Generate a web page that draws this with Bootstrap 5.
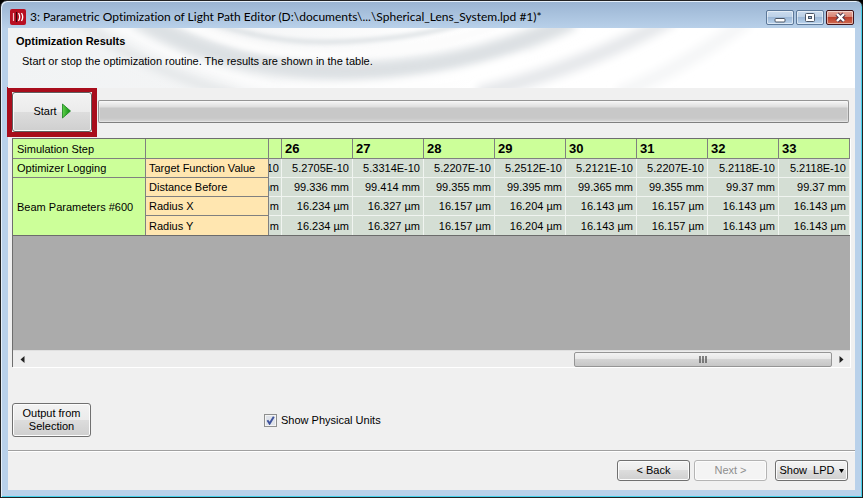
<!DOCTYPE html>
<html lang="en">
<head>
<meta charset="utf-8">
<meta name="viewport" content="width=device-width, initial-scale=1">
<title>3: Parametric Optimization of Light Path Editor</title>
<link rel="stylesheet" href="https://cdn.jsdelivr.net/npm/bootstrap@5.3.0/dist/css/bootstrap.min.css">
<style>
body{background:#000;font:11px/13px "Liberation Sans",Arial,sans-serif;color:#000}
.app-window{background:linear-gradient(#9ab4d2,#b9d1ea 28px);border:1px solid #222;border-radius:7px 7px 0 0;box-shadow:inset 1px 1px 0 #e6f0fa,inset -1px -1px 0 #45d0ea;padding:0 7px 7px}
.title-bar{height:27px;padding:0 1px 0 2px}
.title-text{font:12px/16px Lato,"Noto Sans",sans-serif;font-variant-ligatures:none;padding:8px 0 0 4px}
.title-icon{margin-top:8px}
.win-btns{gap:2px;padding-top:9px}
.win-btn{width:28px;height:15px;padding:0;border:1px solid #5c7899;border-radius:2px;background:linear-gradient(#c9dbee,#bcd0e6 48%,#9db9d8 50%,#b9d2ec);box-shadow:inset 0 0 0 1px #ffffff80}
.win-close{border-color:#43141a;background:linear-gradient(#e6a99c,#d88575 45%,#bd3f2c 50%,#cf6a50)}
.win-btn svg{display:block;margin:auto}
.banner{height:60px;background:#fff}
.banner-art{inset:0;width:100%;height:100%}
.banner h1{font:bold 11px/13px "Liberation Sans",Arial,sans-serif;margin:0;padding:7px 8px 0}
.banner p{margin:0;padding:7px 14px 0}
.page-body{background:#f0f0f0}
.run-row{padding-right:6px}
.hilite{border:5px solid #a80d1c;margin:-1px 1px 1px -1px}
.btn-win{--bs-btn-color:#000;--bs-btn-hover-color:#000;--bs-btn-disabled-color:#8e8e8e;font-size:11px;line-height:13px;padding:0;border:1px solid #707070;border-radius:3px;background:linear-gradient(#f3f3f3,#ebebeb 49%,#dddddd 50%,#cfcfcf);box-shadow:inset 0 0 0 1px #fcfcfc}
.btn-win:hover{background:linear-gradient(#eaf6fd,#d9f0fc 49%,#bee6fd 50%,#a7d9f5);border-color:#3c7fb1}
.btn-win:disabled{background:#f4f4f4;border-color:#b4b4b4;opacity:1}
.btn-start{width:80px;height:40px;border-color:#606060;gap:5px;padding-bottom:2px}
.btn-output{width:79px;height:34px}
.btn-nav{width:73px;height:21px}
.run-bar{height:23px;margin-top:12px;border:1px solid #959595;border-bottom-color:#808080;border-radius:2px;background:linear-gradient(#f6f6f6,#dedede 6px,#c8c8c8 7px,#c8c8c8 17px,#d8d8d8);box-shadow:inset 0 0 0 1px #ffffff50}
.grid-panel{margin:0 5px 0 4px;background:#ababab;border:1px solid #6e6e6e;border-width:1px 0 0 1px;box-shadow:1px 1px 0 #fff}
.result-grid{width:100%;table-layout:fixed;border-collapse:separate;border-spacing:0;border-bottom:1px solid #6c6c6c}
.result-grid th,.result-grid td{height:19px;padding:0 3px;border:0 solid #808080;border-width:0 1px 1px 0;white-space:nowrap;overflow:hidden;line-height:18px;vertical-align:middle;font-weight:400}
.result-grid th{background:#ccff99}
.result-grid th:first-child{padding-left:4px}
.result-grid th.sub-head{background:#ffe6b0;padding-left:3px}
.result-grid thead th{height:20px;font-size:13px;font-weight:700}
.result-grid thead th:first-child{font-size:11px;font-weight:400}
.result-grid td{background:#d4ded4;border-color:#f0f4f0;text-align:right}
.result-grid td.cut{padding:0 2px 0 0}
.result-grid tbody tr:last-child td,.result-grid tbody tr:last-child th,.result-grid th[rowspan]{border-bottom-width:0}
.col-group{width:133px}.col-name{width:123px}.col-cut{width:13px}
.scroll-strip{height:17px;background:#ededed;border-top:1px solid #e0e0e0}
.scroll-arrow{width:18px;height:16px;border:0;padding:0;background:transparent}
.scroll-arrow svg{display:block;margin:auto}
.scroll-thumb{width:258px;height:15px;border:1px solid #959595;border-radius:2px;background:linear-gradient(#f3f3f3,#e6e6e6 49%,#d4d4d4 50%,#c6c6c6);padding:0}
.scroll-thumb svg{display:block;margin:auto}
.option-row{padding:36px 5px 13px 4px}
.units-check{margin-left:173px;gap:4px}
.units-check .form-check-input{width:13px;height:13px;margin:0;float:none;border:1px solid #8e8f8f;border-radius:0;box-shadow:inset 0 0 0 1px #f4f4f4}
.units-check .form-check-input:checked{background:#dfe3ea url("data:image/svg+xml,%3Csvg xmlns='http://www.w3.org/2000/svg' viewBox='0 0 11 11'%3E%3Cpath d='M2.4 5.2 4.6 8.6 8.8 1.8' fill='none' stroke='%233f539c' stroke-width='1.9'/%3E%3C/svg%3E") center/11px 11px no-repeat}
.nav-row{border-top:1px solid #a0a0a0;box-shadow:inset 0 1px 0 #fff;padding:9px 7px 9px 0}
</style>
</head>
<body>
<div class="app-window d-flex flex-column min-vh-100">
  <header class="title-bar d-flex align-items-start">
    <svg class="title-icon flex-shrink-0" width="16" height="16" viewBox="0 0 16 16" aria-hidden="true">
      <rect width="16" height="16" rx="2" fill="#b80f22"/>
      <path d="M3.5 4v8" stroke="#f3c9cd" stroke-width="1.2"/><path d="M6.5 3v10" stroke="#30060b" stroke-width="1.2"/>
      <path d="M8.5 4q2.4 4 0 8M11.5 4q2.4 4 0 8" fill="none" stroke="#fff" stroke-width="1.3"/>
    </svg>
    <div class="title-text text-truncate flex-grow-1">3: Parametric Optimization of Light Path Editor (D:\documents\...\Spherical_Lens_System.lpd #1)*</div>
    <div class="win-btns d-flex flex-shrink-0">
      <button type="button" class="win-btn" aria-label="Minimize"><svg width="12" height="11" viewBox="0 0 12 11"><rect x="1" y="6.5" width="10" height="3.5" rx="1" fill="#fff" stroke="#4b5666"/></svg></button>
      <button type="button" class="win-btn" aria-label="Maximize"><svg width="12" height="11" viewBox="0 0 12 11"><rect x="1.5" y="1.5" width="9" height="8" rx="1" fill="#fff" stroke="#4b5666"/><rect x="4.5" y="4.5" width="3" height="2" fill="#9db9d8" stroke="#4b5666"/></svg></button>
      <button type="button" class="win-btn win-close" aria-label="Close"><svg width="13" height="11" viewBox="0 0 13 11"><path d="M3 2l7 7M10 2l-7 7" stroke="#51364a" stroke-width="4.4"/><path d="M3 2l7 7M10 2l-7 7" stroke="#fff" stroke-width="2.4"/></svg></button>
    </div>
  </header>

  <section class="banner position-relative overflow-hidden">
    <svg class="banner-art position-absolute" viewBox="0 0 847 60" preserveAspectRatio="none" aria-hidden="true">
      <defs>
        <filter id="soft" x="-10%" y="-50%" width="120%" height="200%"><feGaussianBlur stdDeviation="4"/></filter>
        <filter id="fine" x="-10%" y="-50%" width="120%" height="200%"><feGaussianBlur stdDeviation="2"/></filter>
        <linearGradient id="wash"><stop offset="0" stop-color="#f1f3f4"/><stop offset=".25" stop-color="#f4f5f6"/><stop offset=".55" stop-color="#fff"/></linearGradient>
      </defs>
      <rect width="847" height="60" fill="url(#wash)"/>
      <g fill="none">
        <path d="M70-8Q130 40 230 68" stroke="#e3e6e8" stroke-width="9" filter="url(#soft)"/>
        <path d="M100-8Q170 36 270 60" stroke="#fff" stroke-width="7" filter="url(#soft)"/>
        <path d="M130-10Q220 44 340 43Q460 42 565-8" stroke="#dce0e3" stroke-width="18" filter="url(#soft)"/>
        <path d="M165-10Q240 28 325 26Q425 26 500-8" stroke="#fcfcfc" stroke-width="9" filter="url(#fine)"/>
        <path d="M195-8Q260 15 320 14Q400 13 470-8" stroke="#dadfe2" stroke-width="4" filter="url(#fine)"/>
        <path d="M270 60Q410 68 520 30" stroke="#fff" stroke-width="8" filter="url(#soft)"/>
        <path d="M470 66Q580 38 665-10" stroke="#e6e8eb" stroke-width="15" filter="url(#soft)"/>
        <path d="M610 66Q675 40 740-8" stroke="#f5f6f7" stroke-width="14" filter="url(#soft)"/>
      </g>
    </svg>
    <div class="position-relative">
      <h1>Optimization Results</h1>
      <p>Start or stop the optimization routine. The results are shown in the table.</p>
    </div>
  </section>

  <main class="page-body d-flex flex-column flex-grow-1">
    <div class="run-row d-flex align-items-start">
      <div class="hilite flex-shrink-0">
        <button type="button" class="btn btn-win btn-start d-flex align-items-center justify-content-center">Start
          <svg width="9" height="16" viewBox="0 0 9 16" aria-hidden="true"><defs><linearGradient id="go" x2="1"><stop stop-color="#5fd04a"/><stop offset="1" stop-color="#0c8a10"/></linearGradient></defs><path d="M.5 1v14L8.500 8z" fill="url(#go)" stroke="#15801a" stroke-width=".8"/></svg>
        </button>
      </div>
      <div class="flex-grow-1 run-bar" role="progressbar" aria-label="Optimization progress" aria-valuenow="0" aria-valuemin="0" aria-valuemax="100"></div>
    </div>

    <section class="grid-panel d-flex flex-column flex-grow-1 justify-content-between">
      <table class="result-grid">
        <colgroup><col class="col-group"><col class="col-name"><col class="col-cut"><col span="8"></colgroup>
        <thead>
          <tr><th>Simulation Step</th><th></th><th></th><th>26</th><th>27</th><th>28</th><th>29</th><th>30</th><th>31</th><th>32</th><th>33</th></tr>
        </thead>
        <tbody>
          <tr><th>Optimizer Logging</th><th class="sub-head">Target Function Value</th><td class="cut"><div class="d-flex justify-content-end">10</div></td><td>5.2705E-10</td><td>5.3314E-10</td><td>5.2207E-10</td><td>5.2512E-10</td><td>5.2121E-10</td><td>5.2207E-10</td><td>5.2118E-10</td><td>5.2118E-10</td></tr>
          <tr><th rowspan="3">Beam Parameters #600</th><th class="sub-head">Distance Before</th><td class="cut"><div class="d-flex justify-content-end">mm</div></td><td>99.336 mm</td><td>99.414 mm</td><td>99.355 mm</td><td>99.395 mm</td><td>99.365 mm</td><td>99.355 mm</td><td>99.37 mm</td><td>99.37 mm</td></tr>
          <tr><th class="sub-head">Radius X</th><td class="cut"><div class="d-flex justify-content-end">m</div></td><td>16.234 µm</td><td>16.327 µm</td><td>16.157 µm</td><td>16.204 µm</td><td>16.143 µm</td><td>16.157 µm</td><td>16.143 µm</td><td>16.143 µm</td></tr>
          <tr><th class="sub-head">Radius Y</th><td class="cut"><div class="d-flex justify-content-end">m</div></td><td>16.234 µm</td><td>16.327 µm</td><td>16.157 µm</td><td>16.204 µm</td><td>16.143 µm</td><td>16.157 µm</td><td>16.143 µm</td><td>16.143 µm</td></tr>
        </tbody>
      </table>
      <div class="scroll-strip d-flex align-items-center">
        <button type="button" class="scroll-arrow me-auto" aria-label="Scroll left"><svg width="5" height="7" viewBox="0 0 5 7"><path d="M4.500 0v7L.5 3.500z" fill="#222"/></svg></button>
        <button type="button" class="scroll-thumb" aria-label="Scroll position"><svg width="9" height="7" viewBox="0 0 9 7"><path d="M1 0v7M4 0v7M7 0v7" stroke="#555" stroke-width="1.400"/></svg></button>
        <button type="button" class="scroll-arrow" aria-label="Scroll right"><svg width="5" height="7" viewBox="0 0 5 7"><path d="M.5 0v7L4.500 3.500z" fill="#222"/></svg></button>
      </div>
    </section>

    <div class="option-row d-flex align-items-center">
      <button type="button" class="btn btn-win btn-output">Output from Selection</button>
      <div class="units-check d-flex align-items-center">
        <input class="form-check-input" type="checkbox" id="showUnits" checked>
        <label for="showUnits">Show Physical Units</label>
      </div>
    </div>

    <footer class="nav-row d-flex justify-content-end">
      <button type="button" class="btn btn-win btn-nav">&lt; Back</button>
      <button type="button" class="btn btn-win btn-nav ms-1 me-2" disabled>Next &gt;</button>
      <button type="button" class="btn btn-win btn-nav d-flex align-items-center justify-content-center gap-1">Show&nbsp; LPD <svg width="5" height="4" viewBox="0 0 5 4" aria-hidden="true"><path d="M0 0h5L2.500 4z" fill="#000"/></svg></button>
    </footer>
  </main>
</div>
</body>
</html>
